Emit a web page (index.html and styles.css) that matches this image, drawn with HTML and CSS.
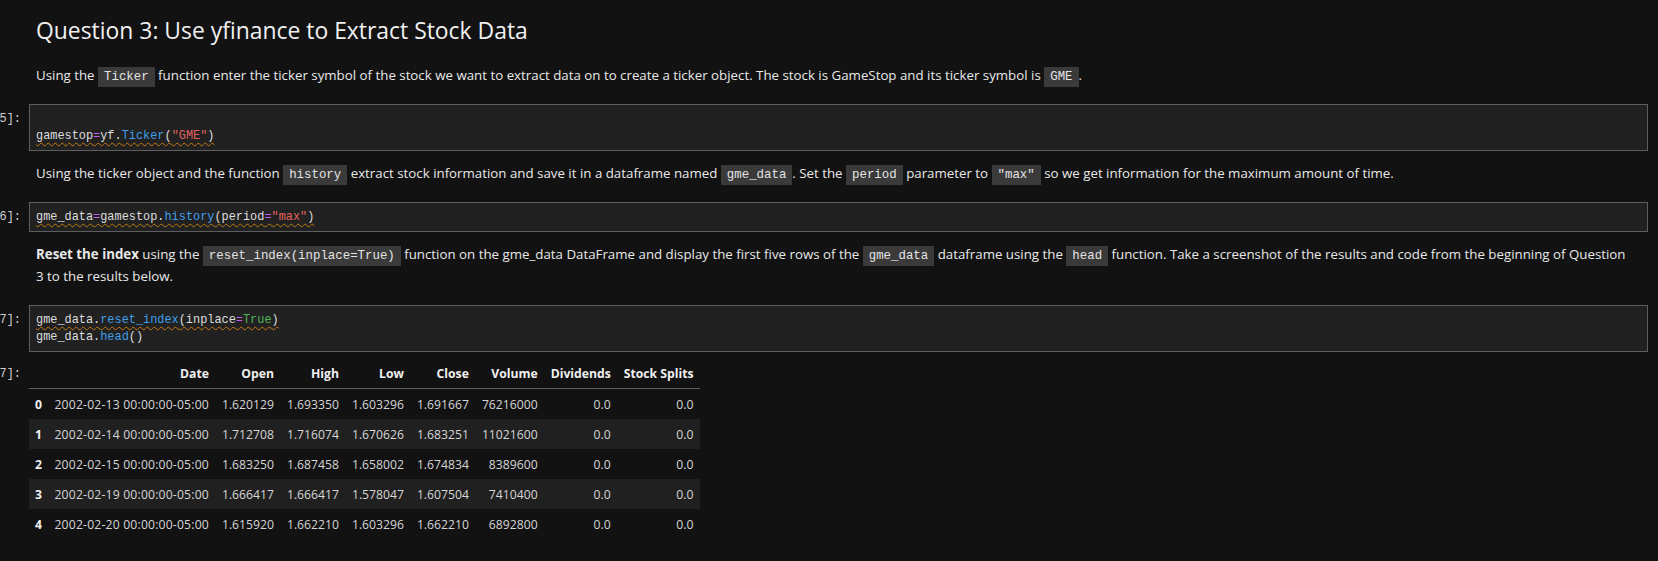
FILE: index.html
```html
<!DOCTYPE html>
<html>
<head>
<meta charset="utf-8">
<link rel="stylesheet" href="styles.css">
</head>
<body>
<div class="nb">
  <div class="cell">
    <div class="prompt"></div>
    <div class="md">
      <h2 class="h2">Question 3: Use yfinance to Extract Stock Data</h2>
      <p class="p">Using the <code class="ic">Ticker</code> function enter the ticker symbol of the stock we want to extract data on to create a ticker object. The stock is GameStop and its ticker symbol is <code class="ic">GME</code>.</p>
    </div>
  </div>

  <div class="cell">
    <div class="prompt code-prompt"><span>[15]:</span></div>
    <div class="code"><div class="line"> </div><div class="line"><span class="sq">gamestop<span class="op">=</span>yf.<span class="fn">Ticker</span>(<span class="str">"GME"</span>)</span></div></div>
  </div>

  <div class="cell">
    <div class="prompt"></div>
    <div class="md">
      <p class="p">Using the ticker object and the function <code class="ic">history</code> extract stock information and save it in a dataframe named <code class="ic">gme_data</code>. Set the <code class="ic">period</code> parameter to <code class="ic">"max"</code> so we get information for the maximum amount of time.</p>
    </div>
  </div>

  <div class="cell">
    <div class="prompt code-prompt"><span>[16]:</span></div>
    <div class="code"><div class="line"><span class="sq">gme_data<span class="op">=</span>gamestop.<span class="fn">history</span>(period<span class="op">=</span><span class="str">"max"</span>)</span></div></div>
  </div>

  <div class="cell">
    <div class="prompt"></div>
    <div class="md">
      <p class="p"><b>Reset the index</b> using the <code class="ic">reset_index(inplace=True)</code> function on the gme_data DataFrame and display the first five rows of the <code class="ic">gme_data</code> dataframe using the <code class="ic">head</code> function. Take a screenshot of the results and code from the beginning of Question 3 to the results below.</p>
    </div>
  </div>

  <div class="cell">
    <div class="prompt code-prompt"><span>[17]:</span></div>
    <div class="code"><div class="line"><span class="sq">gme_data.<span class="fn">reset_index</span>(inplace<span class="op">=</span><span class="kw">True</span>)</span></div><div class="line">gme_data.<span class="fn">head</span>()</div></div>
  </div>

  <div class="cell">
    <div class="prompt out-prompt"><span>[17]:</span></div>
    <div class="out">
      <table class="df">
        <thead>
          <tr><th class="idx"></th><th>Date</th><th>Open</th><th>High</th><th>Low</th><th>Close</th><th>Volume</th><th>Dividends</th><th>Stock Splits</th></tr>
        </thead>
        <tbody>
          <tr><th class="idx">0</th><td class="dt">2002-02-13 00:00:00-05:00</td><td>1.620129</td><td>1.693350</td><td>1.603296</td><td>1.691667</td><td>76216000</td><td>0.0</td><td>0.0</td></tr>
          <tr><th class="idx">1</th><td class="dt">2002-02-14 00:00:00-05:00</td><td>1.712708</td><td>1.716074</td><td>1.670626</td><td>1.683251</td><td>11021600</td><td>0.0</td><td>0.0</td></tr>
          <tr><th class="idx">2</th><td class="dt">2002-02-15 00:00:00-05:00</td><td>1.683250</td><td>1.687458</td><td>1.658002</td><td>1.674834</td><td>8389600</td><td>0.0</td><td>0.0</td></tr>
          <tr><th class="idx">3</th><td class="dt">2002-02-19 00:00:00-05:00</td><td>1.666417</td><td>1.666417</td><td>1.578047</td><td>1.607504</td><td>7410400</td><td>0.0</td><td>0.0</td></tr>
          <tr><th class="idx">4</th><td class="dt">2002-02-20 00:00:00-05:00</td><td>1.615920</td><td>1.662210</td><td>1.603296</td><td>1.662210</td><td>6892800</td><td>0.0</td><td>0.0</td></tr>
        </tbody>
      </table>
    </div>
  </div>
</div>
</body>
</html>
```

FILE: styles.css
```css
html, body {
  margin: 0;
  padding: 0;
  background: #121212;
}
body {
  color: #e8e8e8;
  font-family: "Open Sans", "Noto Sans", sans-serif;
  font-size: 13.3px;
  overflow: hidden;
}
.nb {
  padding-right: 10px;
}
.cell {
  display: flex;
  align-items: flex-start;
}
.prompt {
  flex: none;
  width: 21px;
  margin-right: 8px;
  display: flex;
  justify-content: flex-end;
  white-space: nowrap;
  font-family: "Liberation Mono", monospace;
  font-size: 11.9px;
  line-height: 17px;
  color: #d0d0d0;
}
.code-prompt {
  padding-top: 7px;
}
.out-prompt {
  padding-top: 14px;
}
.md {
  flex: 1;
  min-width: 0;
  padding: 11px 14px 18px 7px;
}
.h2 {
  margin: 4px 0 17px;
  font-size: 22.9px;
  line-height: 32px;
  font-weight: 400;
  color: #f0f0f0;
}
.p {
  margin: 0;
  line-height: 22px;
}
.p b {
  font-weight: 700;
}
.ic {
  font-family: "Liberation Mono", monospace;
  font-size: 12.4px;
  line-height: 1;
  background: #3a3a3a;
  color: #e4e4e4;
  padding: 3px 6px;
}
.code {
  flex: 1;
  min-width: 0;
  background: #212121;
  border: 1px solid #5e5e5e;
  padding: 6px 6px 5px;
  font-family: "Liberation Mono", monospace;
  font-size: 11.9px;
  line-height: 17px;
  color: #dedede;
  white-space: pre;
}
.line {
  height: 17px;
}
.sq {
  text-decoration: underline wavy #c27a12;
  text-decoration-thickness: 1px;
  text-underline-offset: 3px;
  text-decoration-skip-ink: none;
}
.op { color: #c05cf0; }
.fn { color: #3f9ee8; }
.str { color: #e0625e; }
.kw { color: #4fb35a; }
.out {
  flex: 1;
  padding-top: 7px;
}
.df {
  border-collapse: collapse;
  font-size: 12.2px;
  color: #d6d6d6;
}
.df th, .df td {
  height: 30px;
  padding: 0 6.5px;
  text-align: right;
  white-space: nowrap;
}
.df td.dt {
  letter-spacing: 0.18px;
}
.df thead th {
  height: 29px;
  border-bottom: 1px solid #5e5e5e;
  font-weight: 700;
  color: #f0f0f0;
  vertical-align: middle;
}
.df th.idx {
  text-align: left;
  padding: 0 6px;
  font-weight: 700;
  color: #f0f0f0;
}
.df tbody tr:nth-child(even) {
  background: #202020;
}
```
